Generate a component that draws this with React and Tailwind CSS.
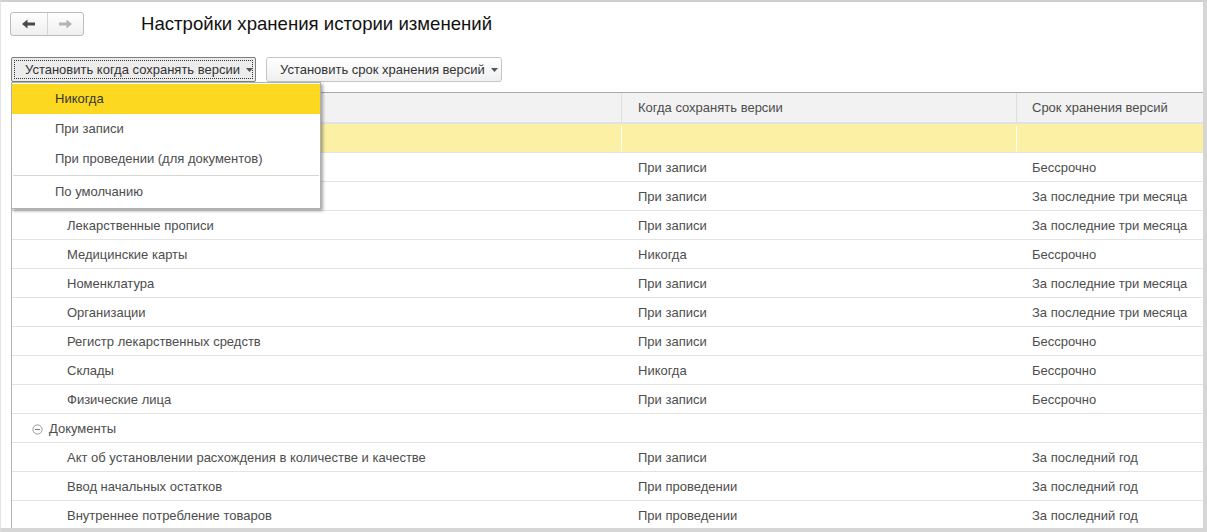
import React from 'react';

// first rows lie under the open menu, so their names are not drawn
const rows = [
  { name: '', when: '', term: '', selected: true },
  { name: '', when: 'При записи', term: 'Бессрочно' },
  { name: '', when: 'При записи', term: 'За последние три месяца' },
  { name: 'Лекарственные прописи', when: 'При записи', term: 'За последние три месяца' },
  { name: 'Медицинские карты', when: 'Никогда', term: 'Бессрочно' },
  { name: 'Номенклатура', when: 'При записи', term: 'За последние три месяца' },
  { name: 'Организации', when: 'При записи', term: 'За последние три месяца' },
  { name: 'Регистр лекарственных средств', when: 'При записи', term: 'Бессрочно' },
  { name: 'Склады', when: 'Никогда', term: 'Бессрочно' },
  { name: 'Физические лица', when: 'При записи', term: 'Бессрочно' },
  { name: 'Документы', group: true, when: '', term: '' },
  { name: 'Акт об установлении расхождения в количестве и качестве', when: 'При записи', term: 'За последний год' },
  { name: 'Ввод начальных остатков', when: 'При проведении', term: 'За последний год' },
  { name: 'Внутреннее потребление товаров', when: 'При проведении', term: 'За последний год' },
];

function Arrow({ dir, color }) {
  return (
    <svg width="13" height="10" viewBox="0 0 13 10" className={dir === 'right' ? 'rotate-180' : ''}>
      <path d="M0 5 L5.5 0.5 L5.5 3.5 L13 3.5 L13 6.5 L5.5 6.5 L5.5 9.5 Z" fill={color} />
    </svg>
  );
}

function Caret() {
  return (
    <svg width="7" height="4" viewBox="0 0 7 4" className="ml-[6px] shrink-0">
      <path d="M0 0 H7 L3.5 4 Z" fill="#555" />
    </svg>
  );
}

function GroupIcon() {
  return (
    <svg width="11" height="11" viewBox="0 0 11 11" className="mr-[6px]">
      <circle cx="5.5" cy="5.5" r="4.6" fill="none" stroke="#9a9a9a" strokeWidth="1" />
      <path d="M3 5.5 H8" stroke="#7a7a7a" strokeWidth="1" />
    </svg>
  );
}

export default function App() {
  return (
    <div className="relative w-[1207px] h-[532px] overflow-hidden bg-white text-[#4d4d4d] font-['Liberation_Sans',Arial,sans-serif] text-[13px]">
      <div className="flex flex-col h-full border-t-2 border-t-[#cfcfcf] border-l border-l-[#e4e4e4] border-r-4 border-r-[#d6d6d6] border-b-4 border-b-[#d6d6d6]">
        {/* top bar */}
        <div className="flex items-center h-[38px] pl-[9px] pt-[6px]">
          <div className="flex h-[24px] w-[74px] rounded-[3px] border border-[#bcbcbc] bg-gradient-to-b from-white to-[#efefef]">
            <div className="flex flex-1 items-center justify-center border-r border-r-[#d4d4d4]">
              <Arrow dir="left" color="#4a4a4a" />
            </div>
            <div className="flex flex-1 items-center justify-center">
              <Arrow dir="right" color="#b4b4b4" />
            </div>
          </div>
          <h1 className="ml-[57px] text-[18.6px] text-[#111] font-normal leading-none">
            Настройки хранения истории изменений
          </h1>
        </div>

        {/* commands */}
        <div className="flex items-center gap-[10px] pl-[10px] mt-[17px] h-[25px]">
          <button className="flex items-center h-[25px] w-[245px] rounded-[2px] border border-[#7d7d7d] bg-[#ececec] p-[2px]">
            <span className="flex items-center h-full w-full pl-[10px] whitespace-nowrap border border-dotted border-[#333] text-[#333]">
              Установить когда сохранять версии
              <Caret />
            </span>
          </button>
          <button className="flex items-center pl-[13px] h-[25px] w-[236px] whitespace-nowrap rounded-[3px] border border-[#c4c4c4] bg-gradient-to-b from-white to-[#f0f0f0] text-[#333]">
            Установить срок хранения версий
            <Caret />
          </button>
        </div>

        {/* table */}
        <div className="ml-[10px] mt-[10px] flex-1 border-l border-l-[#b5b5b5] border-t border-t-[#a9a9a9] overflow-hidden">
          <div className="grid grid-cols-[610px_395px_1fr] h-[31px] bg-[#f2f2f2] border-b-2 border-b-[#e2e2e2]">
            <div className="border-r border-r-[#dedede]" />
            <div className="flex items-center pl-[16px] border-r border-r-[#dedede]">Когда сохранять версии</div>
            <div className="flex items-center pl-[15px]">Срок хранения версий</div>
          </div>
          {rows.map((r, i) => (
            <div
              key={i}
              className={
                'grid grid-cols-[610px_395px_1fr] h-[29px] pt-[2px] border-b border-b-[#e3e3e3] ' +
                (r.selected ? 'bg-[#fcf0a4]' : 'bg-white')
              }
            >
              <div className={'flex items-center border-r border-r-white ' + (r.group ? 'pl-[20px]' : 'pl-[55px]')}>
                {r.group && <GroupIcon />}
                {r.name}
              </div>
              <div className="flex items-center pl-[16px] border-r border-r-white">{r.when}</div>
              <div className="flex items-center pl-[15px] whitespace-nowrap">{r.term}</div>
            </div>
          ))}
        </div>
      </div>

      {/* dropdown menu */}
      <div className="absolute left-[11px] top-[82px] w-[310px] bg-white border border-[#b0b0b0] shadow-[2px_2px_3px_rgba(0,0,0,0.35)] py-[1px] text-[#4d4d4d]">
        <div className="flex items-center h-[30px] pl-[43px] bg-[#fcd920] text-[#333]">Никогда</div>
        <div className="flex items-center h-[30px] pl-[43px]">При записи</div>
        <div className="flex items-center h-[30px] pl-[43px]">При проведении (для документов)</div>
        <div className="mx-[1px] border-t border-t-[#d9d6cf] my-[1px]" />
        <div className="flex items-center h-[30px] pl-[43px]">По умолчанию</div>
      </div>
    </div>
  );
}
